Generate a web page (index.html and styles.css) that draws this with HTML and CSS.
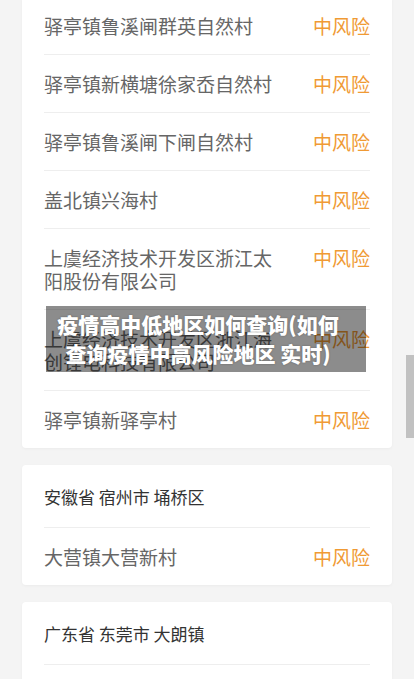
FILE: index.html
```html
<!DOCTYPE html>
<html lang="zh-CN">
<head>
  <meta charset="UTF-8" />
  <meta name="viewport" content="width=device-width, initial-scale=1.0"/>
  <title>中高风险地区查询</title>
  <link rel="stylesheet" href="styles.css">
</head>
<body>
  <div class="risk-list">
    <div class="area-card">
      <div class="area-row"><span class="area-name">驿亭镇鲁溪闸群英自然村</span><span class="risk-level">中风险</span></div>
      <div class="area-row"><span class="area-name">驿亭镇新横塘徐家岙自然村</span><span class="risk-level">中风险</span></div>
      <div class="area-row"><span class="area-name">驿亭镇鲁溪闸下闸自然村</span><span class="risk-level">中风险</span></div>
      <div class="area-row"><span class="area-name">盖北镇兴海村</span><span class="risk-level">中风险</span></div>
      <div class="area-row"><span class="area-name">上虞经济技术开发区浙江太阳股份有限公司</span><span class="risk-level">中风险</span></div>
      <div class="area-row"><span class="area-name">上虞经济技术开发区浙江海创锂电科技有限公司</span><span class="risk-level">中风险</span></div>
      <div class="area-row"><span class="area-name">驿亭镇新驿亭村</span><span class="risk-level">中风险</span></div>
    </div>

    <div class="area-card">
      <div class="area-title">安徽省 宿州市 埇桥区</div>
      <div class="area-row"><span class="area-name">大营镇大营新村</span><span class="risk-level">中风险</span></div>
    </div>

    <div class="area-card">
      <div class="area-title">广东省 东莞市 大朗镇</div>
      <div class="area-row"><span class="area-name">大朗镇松木山村</span><span class="risk-level">中风险</span></div>
    </div>
  </div>

  <div class="caption">疫情高中低地区如何查询(如何查询疫情中高风险地区 实时)</div>
  <div class="scroll-thumb"></div>
</body>
</html>
```

FILE: styles.css
```css
body {
  margin: 0;
  background: #f4f4f4;
  font-family: "Noto Sans CJK SC", "Noto Sans", sans-serif;
  color: #666;
  overflow: hidden;
}

.risk-list {
  display: flex;
  flex-direction: column;
  gap: 17px;
  padding: 0 22px;
  margin-top: -3px;
}

.area-card {
  background: #fff;
  border-radius: 4px;
  box-shadow: 0 1px 3px rgba(0, 0, 0, 0.04);
}

.area-title {
  margin: 0 22px;
  padding: 20px 0 19px;
  border-bottom: 1px solid #eee;
  font-size: 17px;
  line-height: 23px;
  color: #333;
  white-space: pre;
}

.area-row {
  display: flex;
  justify-content: space-between;
  align-items: flex-start;
  margin: 0 22px;
  padding: 17px 0;
  border-bottom: 1px solid #eee;
  font-size: 19px;
  line-height: 23px;
}

.area-row:last-child {
  border-bottom: none;
}

.area-name {
  flex: 1;
  padding-right: 30px;
}

.risk-level {
  color: #f09a34;
  flex-shrink: 0;
}

.caption {
  position: absolute;
  top: 306px;
  left: 46px;
  width: 300px;
  padding: 4px 18px 4px 2px;
  background: rgba(0, 0, 0, 0.45);
  color: #fff;
  font-size: 21px;
  font-weight: 900;
  line-height: 29px;
  text-align: center;
  text-shadow: 0 0 2px rgba(0, 0, 0, 0.3);
}

.scroll-thumb {
  position: fixed;
  top: 355px;
  right: 0;
  width: 8px;
  height: 83px;
  background: #c1c1c1;
}
```
